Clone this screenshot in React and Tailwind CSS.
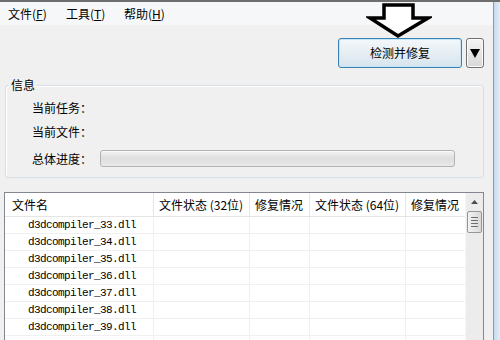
import React from 'react';

const cjk = '"Noto Sans CJK SC", "Noto Sans", sans-serif';
const mono = '"Liberation Mono", "DejaVu Sans Mono", monospace';

const files = [33, 34, 35, 36, 37, 38, 39].map((n) => `d3dcompiler_${n}.dll`);

const cols = 'grid grid-cols-[149px_96px_60px_96px_59px]';

const MenuItem = ({ label, hotkey }) => (
  <div className="w-[58px] text-[12px] leading-[16px] text-black">
    {label}(<span className="underline">{hotkey}</span>)
  </div>
);

const App = () => {
  return (
    <div
      className="relative w-[500px] h-[340px] overflow-hidden bg-[#f0f0f0] flex border-t-2 border-[#6e6e6e]"
      style={{ fontFamily: cjk }}
    >
      {/* main content */}
      <div className="w-[493px] h-full flex flex-col">
        {/* menu bar */}
        <div className="shrink-0 h-[23px] bg-[#f6f7f9] flex items-center pl-[8px]">
          <MenuItem label="文件" hotkey="F" />
          <MenuItem label="工具" hotkey="T" />
          <MenuItem label="帮助" hotkey="H" />
        </div>

        {/* action buttons */}
        <div className="shrink-0 mt-[13px] flex justify-end gap-[4px] pr-[9px]">
          <button className="w-[124px] h-[30px] rounded-[3px] border border-[#3c7fb1] bg-gradient-to-b from-[#f3f8fb] via-[#e6eef3] to-[#d6e4ee] shadow-[inset_0_0_0_1px_#c6e6f8] text-[12px] leading-[16px] text-black">
            检测并修复
          </button>
          <button className="w-[18px] h-[30px] rounded-[3px] border border-[#707070] bg-gradient-to-b from-[#f4f4f4] to-[#d8d8d8] shadow-[inset_0_0_0_1px_#fcfcfc] flex items-center justify-center">
            <svg width="10" height="9" viewBox="0 0 10 9">
              <path d="M0 0 H10 L5 9 Z" fill="#000" />
            </svg>
          </button>
        </div>

        {/* info group */}
        <div className="shrink-0 relative mt-[17px] ml-[5px] w-[479px] h-[93px] rounded-[3px] border border-[#d5dfe5] shadow-[inset_1px_1px_0_#ffffff]">
          <div className="absolute left-[3px] -top-[9px] px-[2px] bg-[#f0f0f0] text-[12px] leading-[16px] text-black">
            信息
          </div>
          <div className="pl-[26px] pt-[12px] flex flex-col text-[12px] text-black">
            <div className="h-[20px] flex items-center">当前任务：</div>
            <div className="h-[20px] mt-[4px] flex items-center">当前文件：</div>
            <div className="h-[17px] mt-[8px] flex items-center">
              <div className="w-[68px]">总体进度：</div>
              <div className="w-[355px] h-[17px] rounded-[3px] border border-[#b2b2b2] bg-gradient-to-b from-[#f3f3f3] via-[#dedede] to-[#e9e9e9] shadow-[inset_0_1px_0_#fbfbfb]" />
            </div>
          </div>
        </div>

        {/* file list */}
        <div className="mt-[14px] ml-[4px] w-[480px] flex-1 min-h-0 overflow-hidden border border-b-0 border-[#828790] bg-white flex">
          <div className="flex-1 flex flex-col">
            <div className={`${cols} shrink-0 h-[24px] border-b border-[#e5e5e5] text-[12px] text-black`}>
              <div className="pl-[7px] flex items-center border-r border-[#e3e5e8]">文件名</div>
              <div className="pl-[5px] flex items-center border-r border-[#e3e5e8] whitespace-nowrap">文件状态 (32位)</div>
              <div className="pl-[5px] flex items-center border-r border-[#e3e5e8]">修复情况</div>
              <div className="pl-[5px] flex items-center border-r border-[#e3e5e8] whitespace-nowrap">文件状态 (64位)</div>
              <div className="pl-[5px] flex items-center">修复情况</div>
            </div>
            {files.map((f) => (
              <div key={f} className={`${cols} shrink-0 h-[17px] border-b border-[#f0f0f0]`}>
                <div
                  className="pl-[23px] flex items-center text-[11px] tracking-[-0.6px] text-black border-r border-[#f0f0f0]"
                  style={{ fontFamily: mono }}
                >
                  {f}
                </div>
                <div className="border-r border-[#f0f0f0]" />
                <div className="border-r border-[#f0f0f0]" />
                <div className="border-r border-[#f0f0f0]" />
                <div />
              </div>
            ))}
            {/* empty tail of the list */}
            <div className={`${cols} flex-1`}>
              <div className="border-r border-[#f0f0f0]" />
              <div className="border-r border-[#f0f0f0]" />
              <div className="border-r border-[#f0f0f0]" />
              <div className="border-r border-[#f0f0f0]" />
              <div />
            </div>
          </div>

          {/* scrollbar */}
          <div className="w-[18px] bg-[#ececec] border-l border-[#f6f6f6] flex flex-col items-center">
            <div className="h-[18px] flex items-center justify-center">
              <svg width="7" height="4" viewBox="0 0 7 4">
                <path d="M0 4 L3.5 0 L7 4 Z" fill="#4d4d4d" />
              </svg>
            </div>
            <div className="w-[15px] h-[22px] rounded-[2px] border border-[#979797] bg-gradient-to-r from-[#f2f2f2] to-[#d9d9d9] flex flex-col items-center justify-center gap-[2px]">
              <div className="w-[7px] h-[1px] bg-[#6f6f6f]" />
              <div className="w-[7px] h-[1px] bg-[#6f6f6f]" />
              <div className="w-[7px] h-[1px] bg-[#6f6f6f]" />
              <div className="w-[7px] h-[1px] bg-[#6f6f6f]" />
            </div>
          </div>
        </div>
      </div>

      {/* window frame */}
      <div className="w-[7px] border-l border-[#8c99a8] bg-gradient-to-r from-[#c7daee] to-[#e3edf7]" />

      {/* annotation arrow */}
      <svg className="absolute left-[366px] top-0" width="66" height="38" viewBox="0 0 66 38">
        <path
          d="M18 3 H47 V16 H62 L32 34 L4 16 H18 Z"
          fill="#ffffff"
          stroke="#000000"
          strokeWidth="3.5"
          strokeLinejoin="miter"
        />
      </svg>
    </div>
  );
};

export default App;
